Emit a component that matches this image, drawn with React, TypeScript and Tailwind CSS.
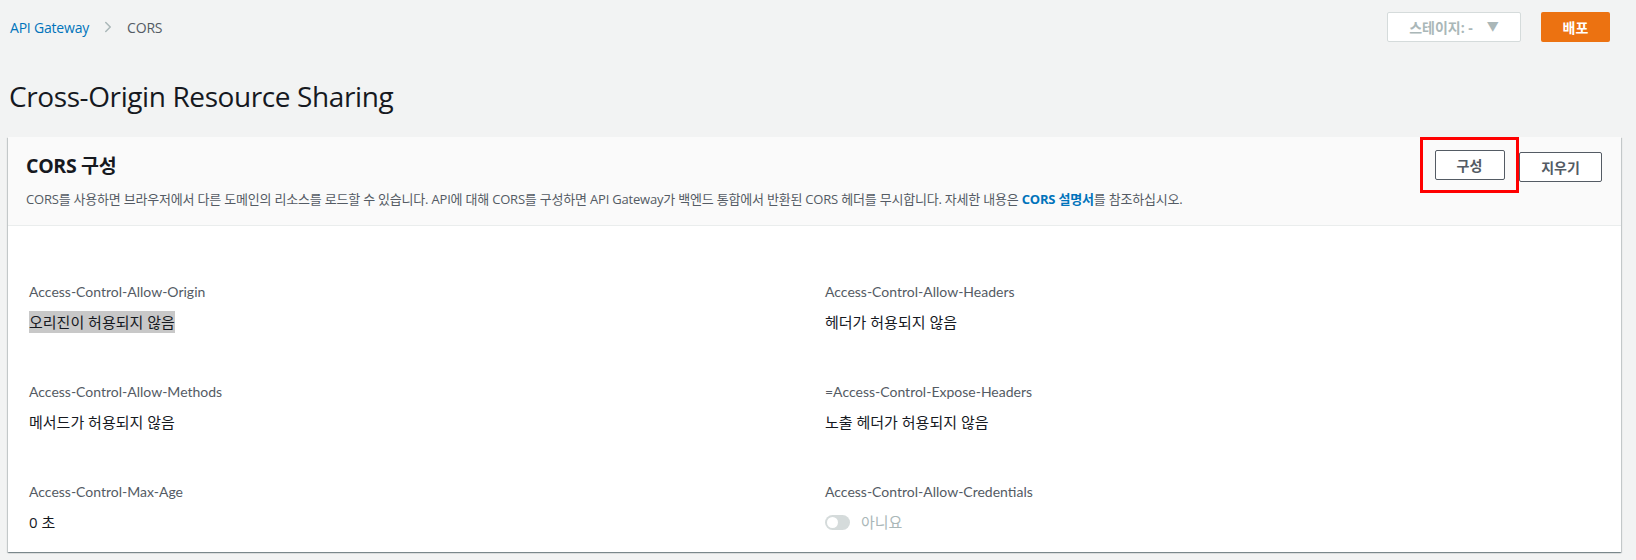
import { ChevronRight } from "lucide-react";

const fields = [
  { label: "Access-Control-Allow-Origin", value: "오리진이 허용되지 않음", highlight: true },
  { label: "Access-Control-Allow-Headers", value: "헤더가 허용되지 않음" },
  { label: "Access-Control-Allow-Methods", value: "메서드가 허용되지 않음" },
  { label: "=Access-Control-Expose-Headers", value: "노출 헤더가 허용되지 않음" },
  { label: "Access-Control-Max-Age", value: "0 초" },
  { label: "Access-Control-Allow-Credentials", value: "아니요", toggle: true },
];

export default function App() {
  return (
    <div
      className="w-[1636px] h-[560px] bg-[#f2f3f3] text-[#16191f] overflow-hidden"
      style={{ fontFamily: '"Open Sans", "Noto Sans CJK KR", sans-serif' }}
    >
      {/* top bar */}
      <div className="flex items-center justify-between pl-[10px] pr-[26px] h-[54px]">
        <nav className="flex items-center text-[14px] tracking-[-0.2px]">
          <a className="text-[#0073bb]">API Gateway</a>
          <ChevronRight className="mx-[10px] w-[18px] h-[18px] text-[#aab7b8]" strokeWidth={2} />
          <span className="text-[#545b64]">CORS</span>
        </nav>
        <div className="flex items-center gap-[20px]">
          <button className="w-[134px] h-[30px] bg-white border border-[#d5dbdb] rounded-[2px] flex items-center justify-center gap-[14px] text-[14px] font-bold text-[#aab7b8]">
            <span>스테이지: -</span>
            <span className="text-[12px]">▼</span>
          </button>
          <button className="w-[69px] h-[30px] bg-[#ec7211] rounded-[2px] text-white text-[14px] font-bold">
            배포
          </button>
        </div>
      </div>

      <h1 className="pl-[9px] mt-[22px] h-[40px] text-[28px] leading-[40px] tracking-[-0.4px] text-[#16191f]">
        Cross-Origin Resource Sharing
      </h1>

      {/* card */}
      <div className="ml-[8px] mt-[21px] w-[1613px] h-[415px] bg-white shadow-[0_1px_1px_0_rgba(0,28,36,0.3),1px_1px_1px_0_rgba(0,28,36,0.15),-1px_1px_1px_0_rgba(0,28,36,0.15)]">
        <div className="h-[89px] bg-[#fafafa] border-b border-[#eaeded] flex justify-between pl-[18px] pr-[19px]">
          <div className="pt-[14px]">
            <h2 className="text-[19.5px] font-bold leading-[30px] tracking-[-0.3px]">CORS 구성</h2>
            <p className="mt-[10px] text-[13px] leading-[16px] text-[#545b64] tracking-[-0.2px]">
              CORS를 사용하면 브라우저에서 다른 도메인의 리소스를 로드할 수 있습니다. API에 대해 CORS를 구성하면 API Gateway가 백엔드 통합에서 반환된 CORS 헤더를 무시합니다. 자세한 내용은{" "}
              <a className="text-[#0073bb] font-bold">CORS 설명서</a>를 참조하십시오.
            </p>
          </div>
          <div className="flex items-start gap-[12px] pt-[15px]">
            <div className="-m-[12px] mt-[-15px] border-[3px] border-[#ff0000] w-[99px] h-[56px] flex items-center justify-center">
              <button className="w-[70px] h-[30px] shrink-0 border border-[#545b64] rounded-[2px] bg-white text-[14px] text-[#545b64] font-bold">
                구성
              </button>
            </div>
            <button className="w-[83px] h-[30px] border border-[#545b64] rounded-[2px] bg-white text-[14px] text-[#545b64] font-bold">
              지우기
            </button>
          </div>
        </div>

        <div className="grid grid-cols-2 pl-[21px] pt-[56px]">
          {fields.map((f) => (
            <div key={f.label} className="h-[100px]">
              <div
                className="text-[14px] leading-[20px] text-[#545b64]"
                style={{ fontFamily: 'Lato, "Noto Sans CJK KR", sans-serif' }}
              >
                {f.label}
              </div>
              <div className="mt-[10px] text-[15px] leading-[20px]">
                {f.toggle ? (
                  <span className="flex items-center gap-[11px] text-[#aab7b8]">
                    <span className="w-[25px] h-[15px] rounded-full bg-[#d5dbdb] relative">
                      <span className="absolute left-[2px] top-[2px] w-[11px] h-[11px] rounded-full bg-white" />
                    </span>
                    {f.value}
                  </span>
                ) : (
                  <span className={f.highlight ? "bg-[#c8c8c8] py-[1px]" : ""}>{f.value}</span>
                )}
              </div>
            </div>
          ))}
        </div>
      </div>
    </div>
  );
}
